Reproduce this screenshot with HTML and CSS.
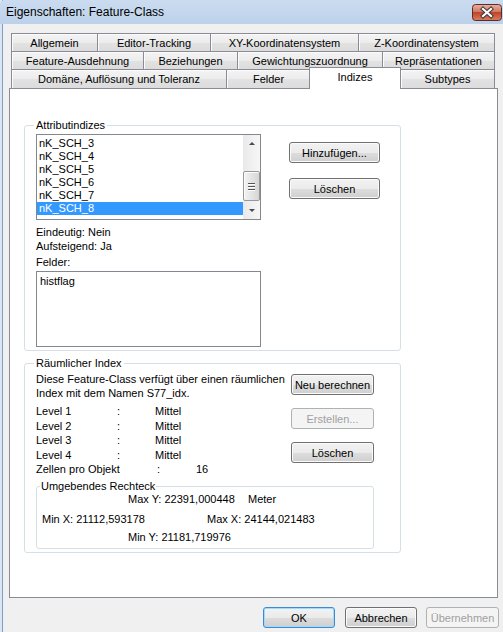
FILE: index.html
```html
<!DOCTYPE html>
<html>
<head>
<meta charset="utf-8">
<title>Eigenschaften: Feature-Class</title>
<link rel="stylesheet" href="styles.css">
</head>
<body>
<div class="window">
  <div class="titlebar">
    <span class="title">Eigenschaften: Feature-Class</span>
    <div class="close">
      <svg width="30" height="17" viewBox="0 0 30 17">
        <defs>
          <linearGradient id="cg" x1="0" y1="0" x2="0" y2="1">
            <stop offset="0" stop-color="#eab0a2"/>
            <stop offset="0.45" stop-color="#d27a63"/>
            <stop offset="0.5" stop-color="#c0432a"/>
            <stop offset="1" stop-color="#d9805f"/>
          </linearGradient>
        </defs>
        <rect x="0.5" y="0.5" width="29" height="16" rx="3" fill="url(#cg)" stroke="#5e2b24"/>
        <path d="M11 5 L19 12 M19 5 L11 12" stroke="#3b3b3b" stroke-width="4.2" stroke-linecap="square"/>
        <path d="M11 5 L19 12 M19 5 L11 12" stroke="#ffffff" stroke-width="2.2" stroke-linecap="square"/>
      </svg>
    </div>
  </div>
  <div class="client">
    <div class="tabs">
      <div class="tabrow row1">
        <div class="tab first">Allgemein</div>
        <div class="tab">Editor-Tracking</div>
        <div class="tab">XY-Koordinatensystem</div>
        <div class="tab">Z-Koordinatensystem</div>
      </div>
      <div class="tabrow row2">
        <div class="tab first">Feature-Ausdehnung</div>
        <div class="tab">Beziehungen</div>
        <div class="tab">Gewichtungszuordnung</div>
        <div class="tab">Repräsentationen</div>
      </div>
      <div class="tabrow row3">
        <div class="tab first">Domäne, Auflösung und Toleranz</div>
        <div class="tab">Felder</div>
        <div class="tab active">Indizes</div>
        <div class="tab">Subtypes</div>
      </div>
    </div>
    <div class="panel">
      <fieldset class="group g-attr">
        <legend>Attributindizes</legend>
        <div class="attr-body">
          <div class="attr-left">
            <div class="listbox">
              <div class="items">
                <div class="item">nK_SCH_3</div>
                <div class="item">nK_SCH_4</div>
                <div class="item">nK_SCH_5</div>
                <div class="item">nK_SCH_6</div>
                <div class="item">nK_SCH_7</div>
                <div class="item sel">nK_SCH_8</div>
              </div>
              <div class="vscroll">
                <div class="arrow"><span class="tri up"></span></div>
                <div class="track">
                  <div class="thumb"><span class="grip"></span><span class="grip"></span><span class="grip"></span></div>
                </div>
                <div class="arrow"><span class="tri down"></span></div>
              </div>
            </div>
            <div class="info first-info">Eindeutig: Nein</div>
            <div class="info">Aufsteigend: Ja</div>
            <div class="info felder">Felder:</div>
            <div class="textbox">histflag</div>
          </div>
          <div class="attr-btns">
            <div class="btn w90">Hinzufügen...</div>
            <div class="btn w90 gap15">Löschen</div>
          </div>
        </div>
      </fieldset>

      <fieldset class="group g-spatial">
        <legend>Räumlicher Index</legend>
        <div class="sp-top">
          <div class="sp-left">
            <div class="desc">Diese Feature-Class verfügt über einen räumlichen</div>
            <div class="desc">Index mit dem Namen S77_idx.</div>
            <div class="levels">
              <span>Level 1</span><span>:</span><span>Mittel</span>
              <span>Level 2</span><span>:</span><span>Mittel</span>
              <span>Level 3</span><span>:</span><span>Mittel</span>
              <span>Level 4</span><span>:</span><span>Mittel</span>
            </div>
            <div class="cells"><span class="c1">Zellen pro Objekt</span><span class="c2">:</span><span>16</span></div>
          </div>
          <div class="sp-btns">
            <div class="btn w83">Neu berechnen</div>
            <div class="btn w83 disabled gap13">Erstellen...</div>
            <div class="btn w83 gap13">Löschen</div>
          </div>
        </div>
        <fieldset class="bbox">
          <legend>Umgebendes Rechteck</legend>
          <div class="brow r1"><span class="bw1">Max Y: 22391,000448</span><span>Meter</span></div>
          <div class="brow r2"><span class="bw2">Min X: 21112,593178</span><span>Max X: 24144,021483</span></div>
          <div class="brow r3"><span>Min Y: 21181,719976</span></div>
        </fieldset>
      </fieldset>
    </div>
    <div class="footer">
      <div class="btn default w72">OK</div>
      <div class="btn w72">Abbrechen</div>
      <div class="btn disabled w73">Übernehmen</div>
    </div>
  </div>
</div>
</body>
</html>
```
FILE: styles.css
```css
* { box-sizing: border-box; }
html, body { margin: 0; padding: 0; }
body {
  width: 503px;
  height: 632px;
  overflow: hidden;
  background: #f0f0f0;
  font-family: "Liberation Sans", Arial, sans-serif;
  font-size: 11px;
  color: #000;
}
.window {
  width: 503px;
  height: 632px;
  display: flex;
  flex-direction: column;
  box-shadow: inset 2px 0 0 #dbe6f3, inset 3px 0 0 #7f9fc8;
}
.titlebar {
  height: 24px;
  flex: none;
  display: flex;
  align-items: center;
  justify-content: space-between;
  padding: 0 1px 0 6px;
  background: linear-gradient(#cbdcf0, #bcd1ea);
  border-top-left-radius: 5px;
}
.title { font-size: 12px; color: #000; }
.close { width: 30px; height: 17px; margin-top: 1px; }
.close svg { display: block; }

.client {
  flex: 1;
  display: flex;
  flex-direction: column;
  padding-top: 9px;
}
.tabs { margin-left: 11px; width: 484px; }
.tabrow { display: grid; }
.row1 { grid-template-columns: 87px 113px 148px 136px; height: 18px; }
.row2 { grid-template-columns: 133px 94px 145px 112px; height: 18px; }
.row3 { grid-template-columns: 216px 84px 90px 94px; height: 19px; }
.tab {
  border-top: 1px solid #898c95;
  border-right: 1px solid #898c95;
  background: linear-gradient(#f4f4f4, #ececec 50%, #e2e2e2 51%, #dcdcdc);
  box-shadow: inset 1px 1px 0 #fbfbfb;
  display: flex;
  align-items: center;
  justify-content: center;
  white-space: nowrap;
}
.tab.first { border-left: 1px solid #898c95; }
.tab.active {
  position: relative;
  z-index: 1;
  margin: -2px 0 -1px -2px;
  border-left: 1px solid #898c95;
  background: #fff;
  box-shadow: none;
  padding-bottom: 4px;
}

.panel {
  margin-left: 9px;
  width: 489px;
  height: 510px;
  border: 1px solid #898c95;
  background: #fff;
  padding-left: 14px;
  padding-top: 30px;
}

fieldset { margin: 0; min-width: 0; }
fieldset.group {
  width: 377px;
  border: 1px solid #d5dfe5;
  border-radius: 3px;
  padding: 2px 26px 3px 11px;
}
fieldset.group > legend {
  padding: 0 2px;
  margin-left: -2px;
  line-height: 13px;
}

.attr-body { display: flex; }
.attr-left { width: 225px; }
.listbox {
  width: 225px;
  height: 86px;
  border: 1px solid #828790;
  display: flex;
}
.items { flex: 1; padding-top: 2px; overflow: hidden; }
.item { height: 13px; line-height: 13px; padding-left: 2px; }
.item.sel { background: #3399ff; color: #fff; }
.vscroll {
  width: 17px;
  display: flex;
  flex-direction: column;
  background: linear-gradient(90deg, #e9e9e9, #f7f7f7);
}
.arrow {
  height: 17px;
  display: flex;
  align-items: center;
  justify-content: center;
}
.tri { width: 0; height: 0; border-left: 3px solid transparent; border-right: 3px solid transparent; }
.tri.up { border-bottom: 3px solid #4a4a4a; }
.tri.down { border-top: 3px solid #4a4a4a; }
.track { flex: 1; padding-top: 19px; }
.thumb {
  height: 30px;
  border: 1px solid #979797;
  border-radius: 2px;
  background: linear-gradient(90deg, #f3f3f3, #e4e4e4 50%, #d6d6d6);
  box-shadow: inset 1px 1px 0 #fcfcfc;
  display: flex;
  flex-direction: column;
  align-items: center;
  justify-content: center;
  gap: 2px;
}
.grip { width: 7px; height: 1px; background: #555; box-shadow: 0 1px 0 #fff; }

.info { line-height: 14px; height: 14px; }
.first-info { margin-top: 5px; }
.felder { margin-top: 2px; }
.textbox {
  margin-top: 2px;
  width: 225px;
  height: 76px;
  border: 1px solid #828790;
  padding: 3px 0 0 3px;
  line-height: 13px;
}
.attr-btns { margin-left: 28px; padding-top: 8px; display: flex; flex-direction: column; }

.btn {
  height: 21px;
  border: 1px solid #707070;
  border-radius: 3px;
  background: linear-gradient(#f2f2f2, #ebebeb 50%, #dddddd 51%, #cfcfcf);
  box-shadow: inset 0 0 0 1px #fbfbfb;
  display: flex;
  align-items: center;
  justify-content: center;
  white-space: nowrap;
  color: #000;
}
.btn.disabled {
  border-color: #adb2b5;
  background: #f4f4f4;
  box-shadow: none;
  color: #a0a0a0;
}
.btn.default {
  border-color: #3c8ad6;
  box-shadow: inset 0 0 0 1px #9edcf8;
}
.w90 { width: 91px; }
.w83 { width: 83px; }
.w72 { width: 72px; }
.w73 { width: 73px; }
.gap15 { margin-top: 15px; }
.gap13 { margin-top: 13px; }

.g-spatial { margin-top: 6px; }
.g-spatial { padding-top: 1px; }
.sp-top { display: flex; }
.sp-left { flex: 1; }
.desc { line-height: 14px; white-space: nowrap; }
.levels {
  margin-top: 4px;
  display: grid;
  grid-template-columns: 81px 38px auto;
  line-height: 14.5px;
}
.cells { display: flex; line-height: 14.5px; }
.cells .c1 { width: 121px; }
.cells .c2 { width: 39px; }
.sp-btns { display: flex; flex-direction: column; padding-top: 2px; }

fieldset.bbox {
  margin-top: 3px;
  width: 338px;
  border: 1px solid #d5dfe5;
  border-radius: 3px;
  padding: 0 0 4px 3px;
}
fieldset.bbox > legend { padding: 0 1px; line-height: 13px; }
.brow { line-height: 13px; display: flex; white-space: nowrap; }
.brow.r1 { padding-left: 88px; }
.brow.r2 { padding-left: 2px; margin-top: 7px; }
.brow.r3 { padding-left: 88px; margin-top: 5px; }
.bw1 { width: 120px; }
.bw2 { width: 165px; }

.footer {
  display: flex;
  justify-content: flex-end;
  padding: 9px 4px 0 0;
}
.footer .btn + .btn { margin-left: 10px; }
.footer .btn.w73 { margin-left: 9px; }
```
